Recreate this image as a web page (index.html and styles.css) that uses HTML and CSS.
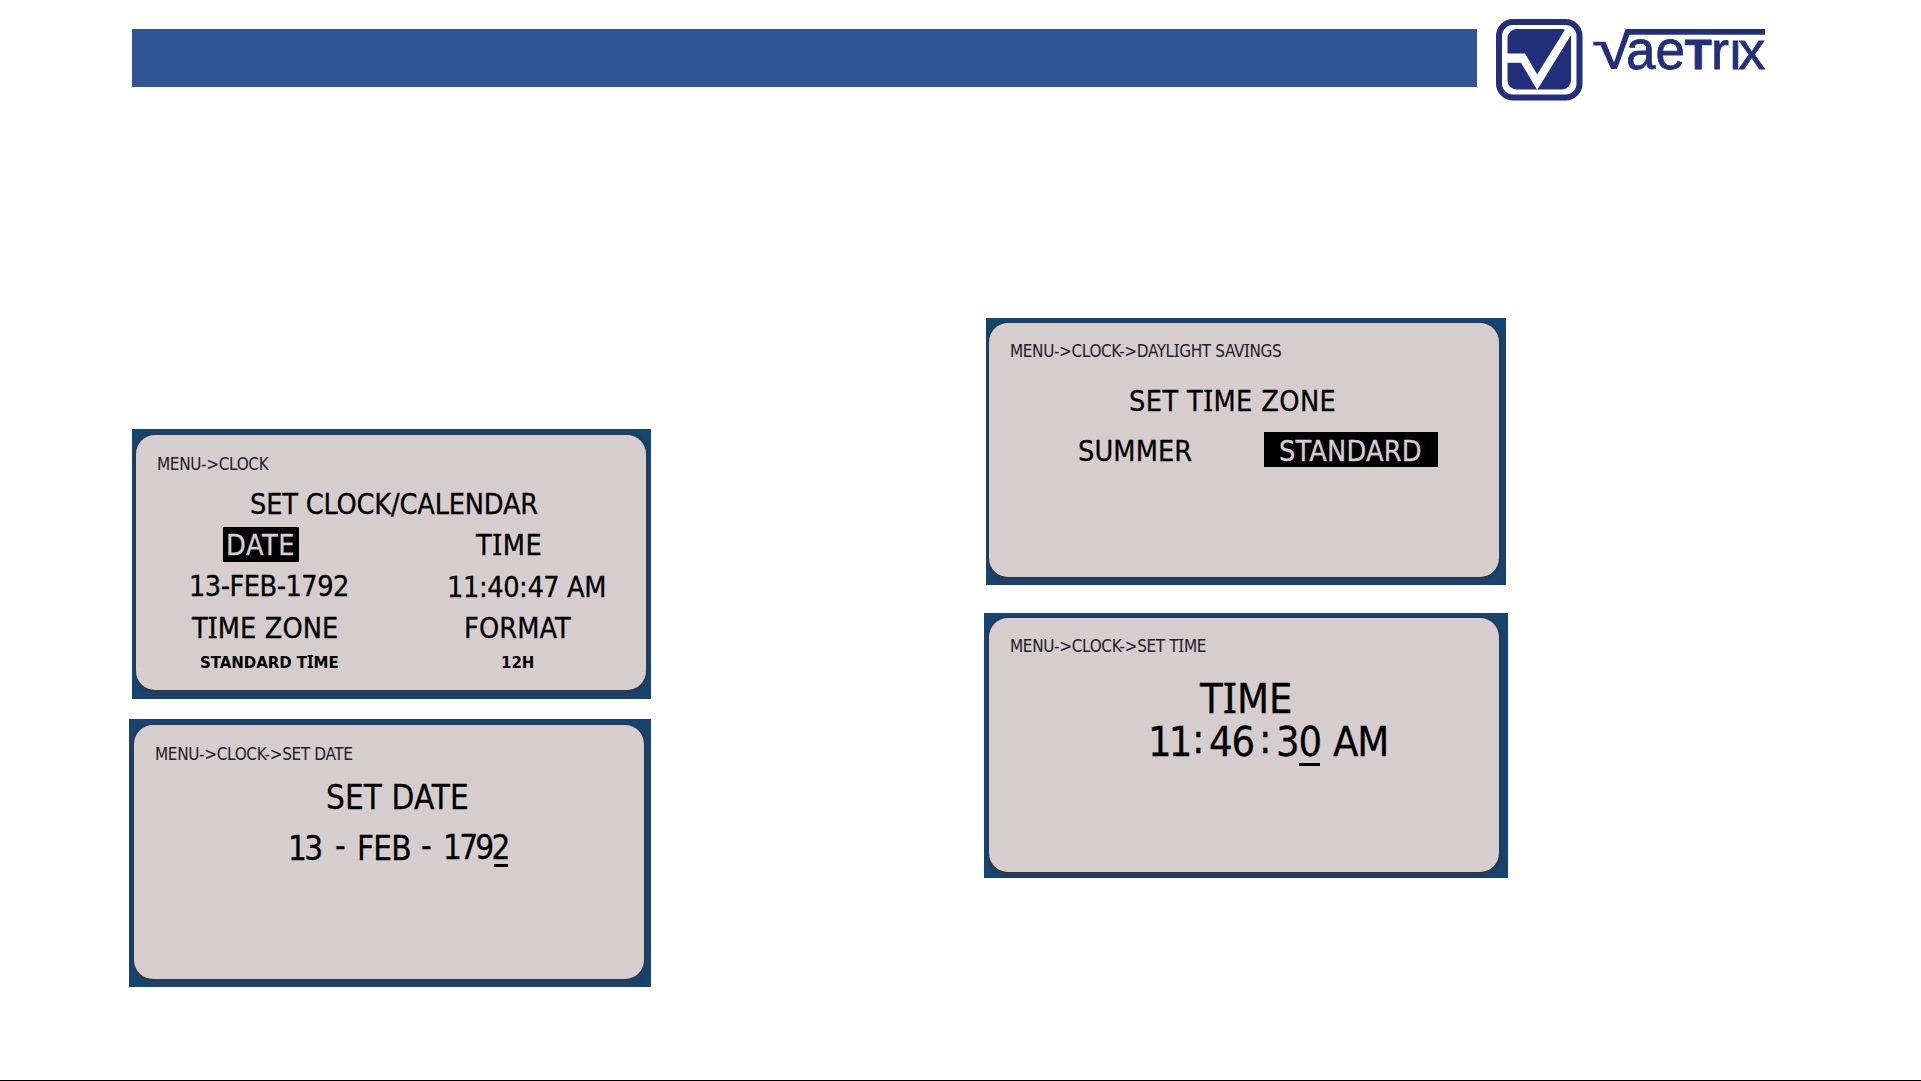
FILE: index.html
```html
<!DOCTYPE html>
<html lang="en">
<head>
    <meta charset="UTF-8">
    <title>Vaetrix - Set Clock</title>
    <meta name="viewport" content="width=device-width, initial-scale=1.0">
    <link rel="stylesheet" href="styles.css">
</head>
<body>
    <header class="header">
        <div class="title-bar"></div>
        <svg class="logo" width="274" height="86" viewBox="0 0 274 86">
            <rect x="3" y="3" width="80.5" height="75.5" rx="14" fill="#fff" stroke="#22307c" stroke-width="6"/>
            <rect x="11.5" y="10" width="63.5" height="60.5" rx="9" fill="#22307c"/>
            <path d="M9 34.5H29L41.2 55.5L70 9H75V16L41.2 71L25 43.8H9Z" fill="#fff"/>
            <path d="M97.3 22.7H109.5L118 43.5L129.5 10H269V15.8H133.5L121 50H115L104.7 26.5H97.3Z" fill="#22307c"/>
            <g class="logo-text">
                <text x="130" y="49.6" font-size="55" textLength="59" lengthAdjust="spacingAndGlyphs">ae</text>
                <text x="188.8" y="50" font-size="42" font-weight="bold" textLength="27" lengthAdjust="spacingAndGlyphs">T</text>
                <text x="215 232 242.3" y="50" font-size="54">rıx</text>
            </g>
        </svg>
    </header>

    <main class="screens">
        <section class="column column-left">
            <div class="screen screen-clock">
                <div class="lcd">
                    <p class="path">MENU-&gt;CLOCK</p>
                    <p class="title">SET CLOCK/CALENDAR</p>
                    <div class="row labels">
                        <span class="date"><b class="selected">DATE</b></span>
                        <span class="time">T<i>I</i>ME</span>
                    </div>
                    <div class="row values">
                        <span class="date">13-FEB-1792</span>
                        <span class="time">11:40:47 AM</span>
                    </div>
                    <div class="row options">
                        <span class="zone">T<i>I</i>ME ZONE</span>
                        <span class="format">FORMAT</span>
                    </div>
                    <div class="row small">
                        <span class="zone">STANDARD T<i>I</i>ME</span>
                        <span class="format">12H</span>
                    </div>
                </div>
            </div>

            <div class="screen screen-date">
                <div class="lcd">
                    <p class="path">MENU-&gt;CLOCK-&gt;SET DATE</p>
                    <p class="title">SET DATE</p>
                    <div class="editor">
                        <span>13</span><span class="sep">-</span><span class="month">FEB</span><span class="sep">-</span><span class="year">179<u>2</u></span>
                    </div>
                </div>
            </div>
        </section>

        <section class="column column-right">
            <div class="screen screen-dst">
                <div class="lcd">
                    <p class="path">MENU-&gt;CLOCK-&gt;DAYL<i>I</i>GHT SAV<i>I</i>NGS</p>
                    <p class="title">SET T<i>I</i>ME ZONE</p>
                    <div class="choices">
                        <span>SUMMER</span>
                        <b class="selected">STANDARD</b>
                    </div>
                </div>
            </div>

            <div class="screen screen-time">
                <div class="lcd">
                    <p class="path">MENU-&gt;CLOCK-&gt;SET T<i>I</i>ME</p>
                    <p class="title">T<i>I</i>ME</p>
                    <div class="editor">
                        <span class="hour">11</span><span class="sep">:</span><span>46</span><span class="sep">:</span><span>3<u>0</u></span><span>AM</span>
                    </div>
                </div>
            </div>
        </section>
    </main>
</body>
</html>
```
FILE: styles.css
```css
* {
    margin: 0;
    padding: 0;
    box-sizing: border-box;
}

body {
    height: 100vh;
    background: #fff;
    color: #000;
    font-family: "DejaVu Sans Condensed", "DejaVu Sans", sans-serif;
    border-bottom: 1px solid #000;
    overflow: hidden;
}

.header {
    display: flex;
    align-items: flex-start;
    gap: 19px;
    height: 318px;
    padding: 19px 0 0 132px;
}

.title-bar {
    width: 1345px;
    height: 58px;
    margin-top: 10px;
    background: #2f5597;
}

.logo-text {
    font-family: "Liberation Sans", Arial, sans-serif;
    fill: #22307c;
    stroke: #22307c;
    stroke-width: 0.8px;
}

.screens {
    display: flex;
    gap: 333px;
    padding-left: 129px;
}

.column {
    display: flex;
    flex-direction: column;
}

.column-left {
    width: 522px;
    padding-top: 111px;
    gap: 20px;
    align-items: flex-end;
}

.column-right {
    width: 524px;
    gap: 28px;
}

/* device screens */

.screen {
    display: flex;
    background: #17436f;
}

.screen-clock {
    width: 519px;
    height: 270px;
    padding: 6px 5px 9px 4px;
}

.screen-date {
    width: 522px;
    height: 268px;
    padding: 6px 7px 8px 5px;
}

.screen-dst {
    width: 520px;
    height: 267px;
    margin-left: 2px;
    padding: 5px 7px 8px 3px;
}

.screen-time {
    width: 524px;
    height: 265px;
    padding: 5px 9px 6px 5px;
}

.lcd {
    flex: 1;
    padding-top: 21px;
    border-radius: 19px;
    background: #d6cdce;
    box-shadow: 0 0 2px 1px #29384a, 0 3px 3px 0 #2d3d4e;
    white-space: nowrap;
}

/* capital I with serifs */
i {
    font-family: "Noto Sans", sans-serif;
    font-size: 1.02em;
    font-style: normal;
    line-height: 0;
}

.path {
    height: 17px;
    padding-left: 21px;
    color: #222028;
    font-size: 17px;
    line-height: 17px;
    letter-spacing: -0.35px;
}

.title,
.row,
.choices {
    font-size: 28.6px;
    line-height: 29px;
}

.title,
.row,
.choices,
.editor {
    -webkit-text-stroke: 0.3px;
}

.selected {
    background: #000;
    color: #d6cdce;
    font-weight: normal;
}

.row {
    display: grid;
    grid-template-columns: 255px 1fr;
    height: 29px;
    margin-top: 12px;
}

/* clock menu */

.screen-clock .title {
    height: 29px;
    margin-top: 17px;
    padding-left: 114px;
    letter-spacing: -0.2px;
}

.labels .date {
    padding-left: 87px;
    letter-spacing: 0.6px;
}

.labels .selected {
    display: block;
    width: 76px;
    height: 35px;
    margin-top: -4px;
    padding: 4px 0 0 3px;
}

.labels .time {
    padding-left: 85px;
    letter-spacing: 0.6px;
}

.values .date {
    padding-left: 53px;
    letter-spacing: -0.5px;
}

.values .time {
    padding: 1px 0 0 56px;
    letter-spacing: -0.4px;
}

.options {
    margin-top: 13px;
    letter-spacing: 0.1px;
}

.options .zone {
    padding-left: 56px;
}

.options .format {
    padding-left: 73px;
}

.small {
    margin-top: 11px;
    font-size: 16.7px;
    font-weight: bold;
    line-height: 17px;
    letter-spacing: -0.05px;
    -webkit-text-stroke: 0;
}

.small .zone {
    padding-left: 64px;
}

.small .format {
    padding-left: 110px;
}

/* editors */

.editor {
    display: grid;
}

.editor u {
    position: relative;
    text-decoration: none;
}

.editor u::after {
    content: "";
    position: absolute;
    background: #000;
}

.screen-date .title,
.screen-date .editor {
    font-size: 33px;
    line-height: 33px;
}

.screen-date .title {
    margin-top: 18px;
    padding-left: 192px;
    letter-spacing: 0.1px;
}

.screen-date .editor {
    grid-template-columns: 47px 22px 64px 22px auto;
    margin-top: 18px;
    padding-left: 154px;
    letter-spacing: -2.7px;
}

.screen-date .sep {
    margin-top: -3px;
}

.screen-date .month {
    letter-spacing: -0.8px;
}

.screen-date .year {
    margin-top: -1px;
}

.screen-date u::after {
    left: 2px;
    bottom: 0;
    width: 14px;
    height: 3px;
}

.screen-time .lcd,
.screen-dst .lcd {
    padding-top: 20px;
}

.screen-time .title,
.screen-time .editor {
    font-size: 41.3px;
    line-height: 41px;
}

.screen-time .title {
    margin-top: 24px;
    padding-left: 211px;
    letter-spacing: 0;
}

.screen-time .editor {
    grid-template-columns: 44px 17px 50px 17px 57px auto;
    margin-top: 2px;
    padding-left: 159px;
    letter-spacing: -1.2px;
}

.screen-time .hour {
    letter-spacing: -3px;
}

.screen-time .sep {
    margin-top: -3px;
}

.screen-time u::after {
    left: 1px;
    bottom: 0;
    width: 21px;
    height: 3px;
}

/* daylight savings */

.screen-dst .path {
    letter-spacing: -0.38px;
}

.screen-dst .title {
    margin-top: 27px;
    padding-left: 140px;
    letter-spacing: 0.4px;
}

.choices {
    display: grid;
    grid-template-columns: 186px 174px;
    margin-top: 21px;
    padding-left: 89px;
    letter-spacing: 0.1px;
}

.choices .selected {
    height: 35px;
    margin-top: -5px;
    padding: 5px 0 0 15px;
    letter-spacing: 0.2px;
}
```
